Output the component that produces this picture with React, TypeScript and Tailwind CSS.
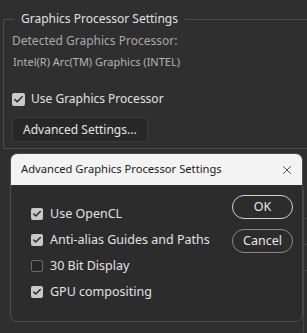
import { Check, X } from "lucide-react";

const Box = ({ checked, size = 12 }: { checked: boolean; size?: number }) => (
  <span
    className={
      "flex items-center justify-center rounded-[2px] shrink-0 " +
      (checked ? "bg-[#c9c9c9]" : "border border-[#6a6a6a] bg-[#262626]")
    }
    style={{ width: size, height: size }}
  >
    {checked && <Check size={size - 2} strokeWidth={3.5} color="#2a2a2a" />}
  </span>
);

const Row = ({ label, checked }: { label: string; checked: boolean }) => (
  <div className="flex items-center gap-[7px] h-[26px]">
    <Box checked={checked} />
    <span className="text-[12.5px] text-[#e2e2e2]">{label}</span>
  </div>
);

const App = () => {
  return (
    <div
      className="relative w-[307px] h-[333px] overflow-hidden bg-[#2f2f2f]"
      style={{ fontFamily: '"Noto Sans", "Open Sans", sans-serif' }}
    >
      <fieldset className="ml-[3px] mt-[11px] w-[330px] h-[138px] border border-[#4b4b4b] pl-[8px]">
        <legend className="ml-[2px] px-[7px] text-[12px] leading-[16px] text-[#e0e0e0]">
          Graphics Processor Settings
        </legend>
        <p className="mt-[6px] text-[12px] leading-[16px] text-[#a9a9a9]">
          Detected Graphics Processor:
        </p>
        <p className="mt-[6px] ml-[1px] text-[11px] leading-[14px] text-[#b4b4b4]">
          Intel(R) Arc(TM) Graphics (INTEL)
        </p>
        <div className="mt-[21px] flex items-center gap-[6px]">
          <Box checked size={13} />
          <span className="text-[12px] text-[#e2e2e2]">Use Graphics Processor</span>
        </div>
        <button className="mt-[9px] h-[25px] px-[10px] rounded-[2px] border border-[#3c3c3c] bg-[#272727] text-[12px] text-[#e4e4e4]">
          Advanced Settings...
        </button>
      </fieldset>

      <div className="absolute right-0 top-[190px] w-[4px] h-[143px] border-l border-[#444]" />
      <div className="absolute right-0 top-[218px] w-[4px] border-t border-[#444]" />
      <div className="absolute right-0 top-[244px] w-[4px] border-t border-[#444]" />
      <div className="absolute right-0 top-[270px] w-[4px] border-t border-[#444]" />

      <div className="absolute left-[10px] top-[153px] w-[293px] h-[169px] rounded-[7px] border border-[#4e4e4e] bg-[#2c2c2c] overflow-hidden">
        <div className="h-[31px] bg-[#f3f3f3] flex items-center justify-between pl-[10px] pr-[8px]">
          <span className="text-[11.2px] text-[#1b1b1b]">
            Advanced Graphics Processor Settings
          </span>
          <X size={14} strokeWidth={1.3} color="#1b1b1b" />
        </div>
        <div className="flex justify-between pl-[20px] pr-[9px]">
          <div className="mt-[16px] flex flex-col">
            <Row label="Use OpenCL" checked />
            <Row label="Anti-alias Guides and Paths" checked />
            <Row label="30 Bit Display" checked={false} />
            <Row label="GPU compositing" checked />
          </div>
          <div className="mt-[10px] flex flex-col gap-[10px]">
            <button className="w-[61px] h-[24px] rounded-full border-[1.5px] border-[#d2d2d2] text-[12.5px] text-[#e6e6e6]">
              OK
            </button>
            <button className="w-[61px] h-[24px] rounded-full border border-[#8a8a8a] text-[12.5px] text-[#e6e6e6]">
              Cancel
            </button>
          </div>
        </div>
      </div>
    </div>
  );
};

export default App;
